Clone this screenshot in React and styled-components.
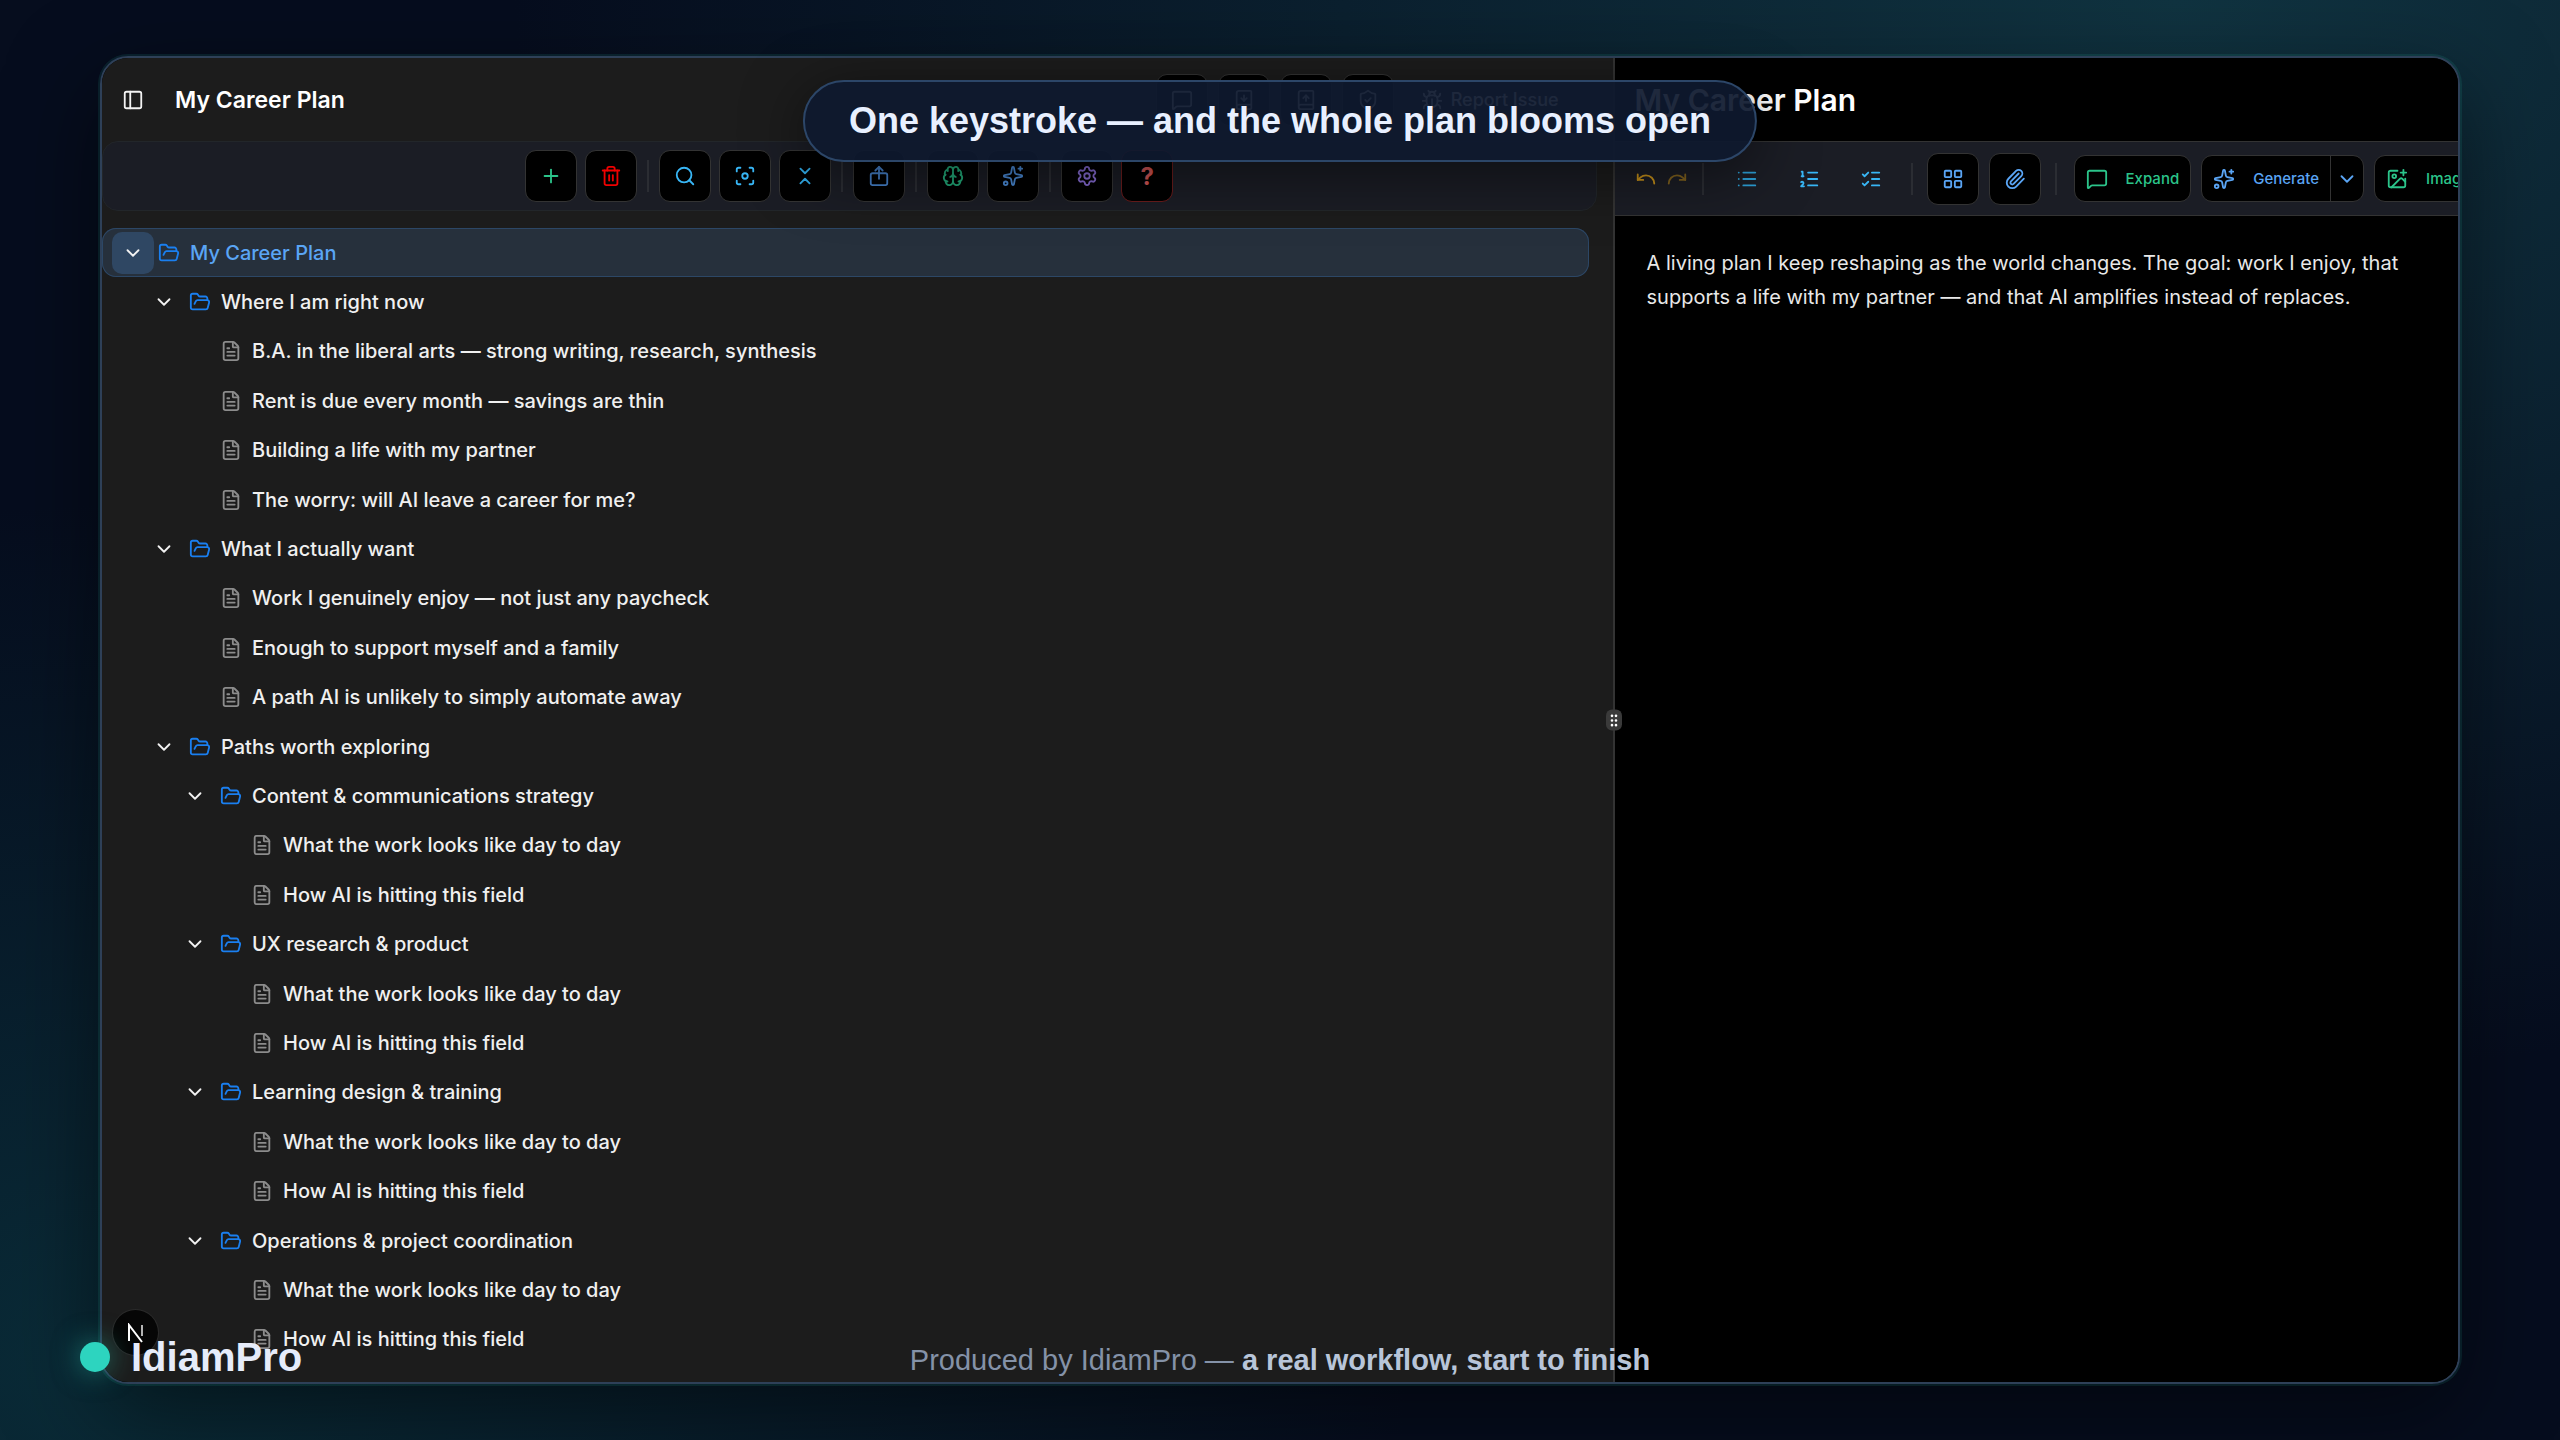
import React from "react";
import styled, { createGlobalStyle, css } from "styled-components";
import {
  BookDown,
  BookUp,
  Brain,
  Bug,
  ChevronDown,
  ChevronsDownUp,
  FileText,
  Focus,
  FolderOpen,
  GripVertical,
  ImagePlus,
  LayoutGrid,
  List,
  ListChecks,
  ListOrdered,
  MessageSquare,
  PanelLeft,
  Paperclip,
  Plus,
  Redo,
  Search,
  Settings,
  ShieldCheck,
  Sparkles,
  Trash2,
  Undo,
} from "lucide-react";

const GlobalStyle = createGlobalStyle`
  * {
    box-sizing: border-box;
  }
  body {
    margin: 0;
    background: #060d1e;
    font-family: Inter, "Liberation Sans", sans-serif;
    color: #f2f2f2;
  }
  button {
    font: inherit;
    color: inherit;
    background: none;
    border: 0;
    padding: 0;
    cursor: pointer;
  }
  h1, h2, p, ul {
    margin: 0;
    padding: 0;
  }
  svg {
    display: block;
    flex: none;
  }
`;

const Stage = styled.div`
  position: relative;
  display: flex;
  height: 100vh;
  padding: 56px 100px;
  overflow: hidden;
  background:
    radial-gradient(ellipse 65% 75% at 85% 0%, #103340 0%, rgba(16, 51, 64, 0) 100%),
    radial-gradient(ellipse 50% 60% at 5% 95%, #0a2c38 0%, rgba(10, 44, 56, 0) 100%),
    #060d1e;
`;

const WindowShadow = styled.div`
  display: flex;
  flex: 1;
  min-width: 0;
  border-radius: 28px;
  box-shadow: 0 0 0 2px rgba(45, 212, 191, 0.1), 0 30px 90px rgba(0, 0, 0, 0.5);
`;

const Window = styled.main`
  position: relative;
  display: flex;
  flex: 1;
  min-width: 0;
  overflow: hidden;
  border: 2px solid #2e4058;
  border-radius: 28px;
  background: #000;
`;

const Outline = styled.section`
  display: flex;
  flex-direction: column;
  flex: 0 0 64.2%;
  min-width: 0;
  border-right: 2px solid #333;
  background: #1c1c1c;
`;

const OutlineHeader = styled.header`
  display: flex;
  align-items: center;
  height: 83px;
  padding: 0 44px 0 20px;
`;

const OutlineTitle = styled.h1`
  flex: 1;
  margin-left: 31px;
  font-size: 23px;
  font-weight: 600;
  color: #fff;
`;

const HeaderActions = styled.div`
  display: flex;
  align-items: center;
  gap: 10px;
`;

const PlainButton = styled.button`
  display: flex;
  align-items: center;
  justify-content: center;
  gap: 8px;
  height: 32px;
  color: ${({ $color }) => $color || "#f2f2f2"};
  opacity: ${({ $dim }) => ($dim ? 0.6 : 1)};
`;

const ReportButton = styled(PlainButton)`
  margin-left: 17px;
  padding-right: 10px;
  font-size: 18px;
  font-weight: 500;
`;

const TileButton = styled.button`
  display: flex;
  align-items: center;
  justify-content: center;
  width: 52px;
  height: 52px;
  flex: none;
  border: 1px solid ${({ $edge }) => $edge || "#333"};
  border-radius: 11px;
  background: #000;
  color: ${({ $color }) => $color};
  font-size: 24px;
  font-weight: 700;
`;

const OutlineToolbar = styled.div`
  display: flex;
  align-items: center;
  justify-content: center;
  gap: 8px;
  height: 70px;
  margin-right: 16px;
  border: 1px solid #22262a;
  border-radius: 16px;
  background: #1b1d25;
`;

const Separator = styled.span`
  width: 2px;
  height: 32px;
  margin: 0 ${({ $space }) => $space || 2}px;
  flex: none;
  background: #2b2d33;
`;

const Tree = styled.ul`
  display: flex;
  flex-direction: column;
  flex: 1;
  padding: 17px 24px 18px 0;
  list-style: none;
`;

const Row = styled.li`
  display: flex;
  align-items: center;
  flex: 1;
  padding-left: ${({ $depth }) => 10 + $depth * 31}px;
  font-size: 20px;
  font-weight: 500;
  white-space: nowrap;
  color: #f0f0f0;
  ${({ $selected }) =>
    $selected &&
    css`
      border-radius: 14px;
      background: #26303c;
      box-shadow: inset 0 0 0 1px #2c4766;
      color: #5aa5f5;
    `}
`;

const Toggle = styled.button`
  display: flex;
  align-items: center;
  justify-content: center;
  width: 42px;
  height: 42px;
  margin-right: 4px;
  border-radius: 10px;
  color: #f2f2f2;
  background: ${({ $active }) => ($active ? "#2f4763" : "none")};
`;

const ToggleSpace = styled.span`
  width: 46px;
`;

const RowIcon = styled.span`
  margin-right: 10px;
  color: ${({ $leaf }) => ($leaf ? "#8c8c8c" : "#1a7ff0")};
`;

const Detail = styled.section`
  display: flex;
  flex-direction: column;
  flex: 1;
  min-width: 0;
  background: #000;
`;

const DetailHeader = styled.header`
  display: flex;
  align-items: center;
  height: 83px;
  padding: 0 20px;
`;

const DetailTitle = styled.h2`
  font-size: 30px;
  font-weight: 600;
  color: #fff;
`;

const DetailToolbar = styled.div`
  display: flex;
  align-items: center;
  height: 75px;
  padding-left: 20px;
  overflow: hidden;
  border: solid #333;
  border-width: 1px 0;
  background: #1b1d25;
`;

const ToolGroup = styled.div`
  display: flex;
  align-items: center;
  flex: none;
  gap: ${({ $gap }) => $gap}px;
  padding: 0 ${({ $pad }) => $pad}px;
`;

const ActionGroup = styled.div`
  display: flex;
  flex: none;
  height: 47px;
  border: 1px solid #333;
  border-radius: 11px;
  background: #000;
  color: ${({ $color }) => $color};
`;

const ActionButton = styled.button`
  display: flex;
  align-items: center;
  gap: 18px;
  padding: 0 11px;
  font-size: 15px;
  font-weight: 500;
`;

const ActionMenu = styled.button`
  display: flex;
  align-items: center;
  padding: 0 5px;
  border-left: 1px solid #333;
`;

const Note = styled.p`
  padding: 30px 56px 30px 32px;
  font-size: 20px;
  line-height: 34px;
  color: #e8e8e8;
`;

const Grip = styled.button`
  position: absolute;
  top: 50%;
  left: calc(64.2% - 1px);
  display: flex;
  align-items: center;
  justify-content: center;
  width: 16px;
  height: 21px;
  overflow: hidden;
  transform: translate(-50%, -50%);
  border-radius: 6px;
  background: #3a3a3a;
`;

const Caption = styled.div`
  position: absolute;
  top: 80px;
  left: 50%;
  transform: translateX(-50%);
  padding: 0 44px;
  border: 2px solid #2c4668;
  border-radius: 41px;
  background: rgba(14, 25, 46, 0.93);
  box-shadow: 0 12px 60px rgba(0, 0, 0, 0.5);
  font-family: "Liberation Sans", Arial, sans-serif;
  font-size: 36px;
  font-weight: 700;
  line-height: 78px;
  white-space: nowrap;
  color: #e8f0ff;
`;

const DevBadge = styled.button`
  position: absolute;
  left: 113px;
  bottom: 85px;
  display: flex;
  align-items: center;
  justify-content: center;
  width: 45px;
  height: 45px;
  border-radius: 50%;
  background: #060606;
  box-shadow: 0 0 0 1px #2a2a2a;
`;

const Brand = styled.div`
  position: absolute;
  left: 80px;
  bottom: 60px;
  display: flex;
  align-items: center;
  gap: 21px;
  font-family: "Liberation Sans", Arial, sans-serif;
  font-size: 40px;
  font-weight: 700;
  line-height: 46px;
  color: #e6ecfa;
`;

const BrandDot = styled.span`
  width: 30px;
  height: 30px;
  border-radius: 50%;
  background: #2dd4bf;
  box-shadow: 0 0 28px rgba(45, 212, 191, 0.5);
`;

const Credit = styled.p`
  position: absolute;
  left: 50%;
  bottom: 63px;
  transform: translateX(-50%);
  font-family: "Liberation Sans", Arial, sans-serif;
  font-size: 29px;
  line-height: 34px;
  white-space: nowrap;
  color: #8492a8;

  strong {
    color: #b8c5d9;
  }
`;

const ICON = 22;

function ShareUp({ size }) {
  return (
    <svg
      width={size}
      height={size}
      viewBox="0 0 24 24"
      fill="none"
      stroke="currentColor"
      strokeWidth="2"
      strokeLinecap="round"
      strokeLinejoin="round"
    >
      <path d="M12 2v13" />
      <path d="m8 6 4-4 4 4" />
      <rect x="3" y="9" width="18" height="13" rx="2" />
    </svg>
  );
}

const workNotes = (depth) => [
  { depth, text: "What the work looks like day to day" },
  { depth, text: "How AI is hitting this field" },
];

const rows = [
  { depth: 0, text: "My Career Plan", folder: true, selected: true },
  { depth: 1, text: "Where I am right now", folder: true },
  { depth: 2, text: "B.A. in the liberal arts — strong writing, research, synthesis" },
  { depth: 2, text: "Rent is due every month — savings are thin" },
  { depth: 2, text: "Building a life with my partner" },
  { depth: 2, text: "The worry: will AI leave a career for me?" },
  { depth: 1, text: "What I actually want", folder: true },
  { depth: 2, text: "Work I genuinely enjoy — not just any paycheck" },
  { depth: 2, text: "Enough to support myself and a family" },
  { depth: 2, text: "A path AI is unlikely to simply automate away" },
  { depth: 1, text: "Paths worth exploring", folder: true },
  { depth: 2, text: "Content & communications strategy", folder: true },
  ...workNotes(3),
  { depth: 2, text: "UX research & product", folder: true },
  ...workNotes(3),
  { depth: 2, text: "Learning design & training", folder: true },
  ...workNotes(3),
  { depth: 2, text: "Operations & project coordination", folder: true },
  ...workNotes(3),
];

const outlineTools = [
  [
    { label: "Add", Icon: Plus, color: "#2bc48a" },
    { label: "Delete", Icon: Trash2, color: "#f00000" },
  ],
  [
    { label: "Search", Icon: Search, color: "#38b6f5" },
    { label: "Focus", Icon: Focus, color: "#38b6f5" },
    { label: "Collapse all", Icon: ChevronsDownUp, color: "#30a8e4" },
  ],
  [{ label: "Share", Icon: ShareUp, color: "#4682cc" }],
  [
    { label: "Knowledge", Icon: Brain, color: "#22a878" },
    { label: "Generate outline", Icon: Sparkles, color: "#4a8ad6" },
  ],
  [
    { label: "Settings", Icon: Settings, color: "#846ad0" },
    { label: "Help", color: "#d05656", edge: "#6a1c1c" },
  ],
];

const headerTools = [
  { label: "Chat", Icon: MessageSquare },
  { label: "Import", Icon: BookDown },
  { label: "Export", Icon: BookUp },
  { label: "Privacy", Icon: ShieldCheck },
];

function TreeRow({ depth, text, folder, selected }) {
  return (
    <Row $depth={depth} $selected={selected}>
      {folder ? (
        <Toggle aria-label={`Collapse ${text}`} $active={selected}>
          <ChevronDown size={ICON} />
        </Toggle>
      ) : (
        <ToggleSpace />
      )}
      <RowIcon $leaf={!folder}>{folder ? <FolderOpen size={ICON} /> : <FileText size={ICON} />}</RowIcon>
      {text}
    </Row>
  );
}

function OutlinePanel() {
  return (
    <Outline>
      <OutlineHeader>
        <PlainButton aria-label="Toggle sidebar">
          <PanelLeft size={ICON} />
        </PlainButton>
        <OutlineTitle>My Career Plan</OutlineTitle>
        <HeaderActions>
          {headerTools.map(({ label, Icon }) => (
            <TileButton key={label} aria-label={label} $color="#d0d0d0">
              <Icon size={ICON} />
            </TileButton>
          ))}
          <ReportButton>
            <Bug size={ICON} />
            Report Issue
          </ReportButton>
        </HeaderActions>
      </OutlineHeader>
      <OutlineToolbar>
        {outlineTools.map((group, i) => (
          <React.Fragment key={i}>
            {i > 0 && <Separator />}
            {group.map(({ label, Icon, color, edge }) => (
              <TileButton key={label} aria-label={label} $color={color} $edge={edge}>
                {Icon ? <Icon size={ICON} /> : "?"}
              </TileButton>
            ))}
          </React.Fragment>
        ))}
      </OutlineToolbar>
      <Tree>
        {rows.map((row, i) => (
          <TreeRow key={i} {...row} />
        ))}
      </Tree>
    </Outline>
  );
}

function DetailPanel() {
  return (
    <Detail>
      <DetailHeader>
        <DetailTitle>My Career Plan</DetailTitle>
      </DetailHeader>
      <DetailToolbar>
        <ToolGroup $gap={9} $pad={0}>
          <PlainButton aria-label="Undo" $color="#c8921a">
            <Undo size={ICON} />
          </PlainButton>
          <PlainButton aria-label="Redo" $color="#c8921a" $dim>
            <Redo size={ICON} />
          </PlainButton>
        </ToolGroup>
        <ToolGroup $gap={0} $pad={12}>
          <Separator />
        </ToolGroup>
        <ToolGroup $gap={40} $pad={18}>
          <PlainButton aria-label="Bulleted list" $color="#2c9fd6">
            <List size={ICON} />
          </PlainButton>
          <PlainButton aria-label="Numbered list" $color="#38b6f5">
            <ListOrdered size={ICON} />
          </PlainButton>
          <PlainButton aria-label="Task list" $color="#38b6f5">
            <ListChecks size={ICON} />
          </PlainButton>
        </ToolGroup>
        <ToolGroup $gap={10} $pad={7}>
          <Separator $space={4} />
          <TileButton aria-label="Insert block" $color="#5aa5f5">
            <LayoutGrid size={ICON} />
          </TileButton>
          <TileButton aria-label="Attach file" $color="#5aa5f5">
            <Paperclip size={ICON} />
          </TileButton>
          <Separator $space={4} />
        </ToolGroup>
        <ToolGroup $gap={10} $pad={6}>
          <ActionGroup $color="#2bc48a">
            <ActionButton>
              <MessageSquare size={ICON} />
              Expand
            </ActionButton>
          </ActionGroup>
          <ActionGroup $color="#5aa5f5">
            <ActionButton>
              <Sparkles size={ICON} />
              Generate
            </ActionButton>
            <ActionMenu aria-label="Generate options">
              <ChevronDown size={ICON} />
            </ActionMenu>
          </ActionGroup>
          <ActionGroup $color="#2bc48a">
            <ActionButton>
              <ImagePlus size={ICON} />
              Image
            </ActionButton>
          </ActionGroup>
        </ToolGroup>
      </DetailToolbar>
      <Note>
        A living plan I keep reshaping as the world changes. The goal: work I enjoy, that supports a life with my
        partner — and that AI amplifies instead of replaces.
      </Note>
    </Detail>
  );
}

export default function App() {
  return (
    <>
      <GlobalStyle />
      <Stage>
        <WindowShadow>
          <Window>
            <OutlinePanel />
            <DetailPanel />
            <Grip aria-label="Resize panels">
              <GripVertical size={16} color="#fff" />
            </Grip>
          </Window>
        </WindowShadow>
        <Caption>One keystroke — and the whole plan blooms open</Caption>
        <DevBadge aria-label="Open dev tools">
          <svg width="18" height="20" viewBox="0 0 18 20" fill="none" stroke="#fff" strokeWidth="2">
            <path d="M2 18V2L15 19" />
            <path d="M15 2v11" strokeOpacity="0.7" />
          </svg>
        </DevBadge>
        <Brand>
          <BrandDot />
          IdiamPro
        </Brand>
        <Credit>
          Produced by IdiamPro — <strong>a real workflow, start to finish</strong>
        </Credit>
      </Stage>
    </>
  );
}
